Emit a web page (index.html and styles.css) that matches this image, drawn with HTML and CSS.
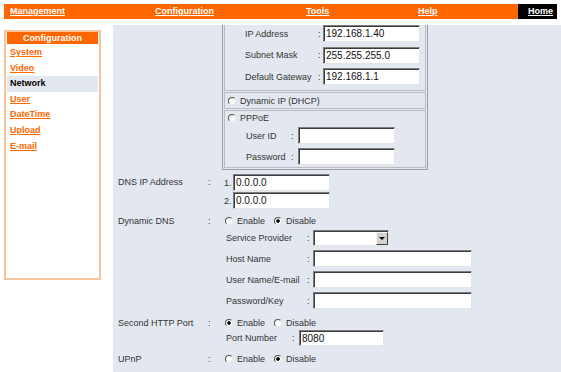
FILE: index.html
```html
<!DOCTYPE html>
<html>
<head>
<meta charset="utf-8">
<title>Network</title>
<link rel="stylesheet" href="styles.css">
</head>
<body>
<div class="topbar">
  <div class="tcell c1"><a href="#">Management</a></div>
  <div class="tcell c2"><a href="#">Configuration</a></div>
  <div class="tcell c3"><a href="#">Tools</a></div>
  <div class="tcell c4"><a href="#">Help</a></div>
  <div class="tcell c5"><a href="#">Home</a></div>
</div>
<div class="main">
  <div class="sidebar">
    <div class="side-head">Configuration</div>
    <div class="side-list">
      <a class="side-item" href="#">System</a>
      <a class="side-item" href="#">Video</a>
      <div class="side-item active">Network</div>
      <a class="side-item" href="#">User</a>
      <a class="side-item" href="#">DateTime</a>
      <a class="side-item" href="#">Upload</a>
      <a class="side-item" href="#">E-mail</a>
    </div>
  </div>
  <div class="content">
    <div class="frow">
      <div></div><div></div>
      <div class="box">
        <div class="sec sec-static">
          <div class="kv"><span>IP Address</span><span>:</span><input class="tb" type="text" value="192.168.1.40"></div>
          <div class="kv"><span>Subnet Mask</span><span>:</span><input class="tb" type="text" value="255.255.255.0"></div>
          <div class="kv"><span>Default Gateway</span><span>:</span><input class="tb" type="text" value="192.168.1.1"></div>
        </div>
        <div class="sec sec-dhcp">
          <label class="opt"><input class="rd" type="radio" name="ipmode"><span>Dynamic IP (DHCP)</span></label>
        </div>
        <div class="sec sec-pppoe">
          <label class="opt"><input class="rd" type="radio" name="ipmode"><span>PPPoE</span></label>
          <div class="kv kv-ppp"><span>User ID</span><span>:</span><input class="tb" type="text" value=""></div>
          <div class="kv kv-ppp"><span>Password</span><span>:</span><input class="tb" type="password" value=""></div>
        </div>
      </div>
    </div>

    <div class="frow r-dns">
      <div class="lab">DNS IP Address</div><div class="lab">:</div>
      <div class="dns">
        <div class="dnsline"><span class="num">1.</span><input class="tb" type="text" value="0.0.0.0"></div>
        <div class="dnsline"><span class="num">2.</span><input class="tb" type="text" value="0.0.0.0"></div>
      </div>
    </div>

    <div class="frow r-ddns">
      <div class="lab lab-r">Dynamic DNS</div><div class="lab lab-r">:</div>
      <div>
        <div class="radios">
          <label class="opt"><input class="rd" type="radio" name="ddns"><span>Enable</span></label>
          <label class="opt"><input class="rd" type="radio" name="ddns" checked><span>Disable</span></label>
        </div>
        <div class="sub sub-ddns">
          <span>Service Provider</span><span>:</span>
          <div class="select"><span class="sel-val"></span><span class="sel-btn"><span class="tri"></span></span></div>
          <span>Host Name</span><span>:</span><input class="tb wide" type="text" value="">
          <span>User Name/E-mail</span><span>:</span><input class="tb wide" type="text" value="">
          <span>Password/Key</span><span>:</span><input class="tb wide" type="password" value="">
        </div>
      </div>
    </div>

    <div class="frow r-http">
      <div class="lab lab-r">Second HTTP Port</div><div class="lab lab-r">:</div>
      <div>
        <div class="radios">
          <label class="opt"><input class="rd" type="radio" name="http2" checked><span>Enable</span></label>
          <label class="opt"><input class="rd" type="radio" name="http2"><span>Disable</span></label>
        </div>
        <div class="sub sub-port">
          <span>Port Number</span><span>:</span><input class="tb port" type="text" value="8080">
        </div>
      </div>
    </div>

    <div class="frow r-upnp">
      <div class="lab lab-r">UPnP</div><div class="lab lab-r">:</div>
      <div>
        <div class="radios">
          <label class="opt"><input class="rd" type="radio" name="upnp"><span>Enable</span></label>
          <label class="opt"><input class="rd" type="radio" name="upnp" checked><span>Disable</span></label>
        </div>
      </div>
    </div>
  </div>
</div>
</body>
</html>
```

FILE: styles.css
```css
html, body {
  margin: 0;
  padding: 0;
  background: #ffffff;
  height: 372px;
  overflow: hidden;
}
body {
  font-family: "Liberation Sans", Arial, sans-serif;
  font-size: 9px;
  color: #333333;
}

/* top navigation */
.topbar {
  display: flex;
  margin: 4px 4px 0 4px;
  width: 553px;
  height: 15px;
  line-height: 15px;
  background: #ff6600;
  font-weight: bold;
}
.tcell {
  padding-left: 6px;
  box-sizing: border-box;
}
.tcell a {
  color: #ffffff;
  text-decoration: underline;
}
.c1 { width: 145px; }
.c2 { width: 151px; }
.c3 { width: 112px; }
.c4 { width: 106px; }
.c5 {
  width: 39px;
  padding-left: 10px;
  background: #000000;
}

.main {
  display: flex;
  align-items: flex-start;
  margin-top: 6px;
}

/* sidebar */
.sidebar {
  margin: 5px 0 0 4px;
  width: 97px;
  height: 250px;
  box-sizing: border-box;
  border: 2px solid #f7c39c;
  padding: 0 1px;
  background: #ffffff;
  flex: none;
}
.side-head {
  height: 12px;
  line-height: 12px;
  background: #ff6600;
  color: #ffffff;
  font-weight: bold;
  text-align: center;
  margin-bottom: 1px;
}
.side-list {
  display: flex;
  flex-direction: column;
}
.side-item {
  height: 15.6px;
  line-height: 15.6px;
  padding-left: 3px;
  font-weight: bold;
  color: #ff6600;
  text-decoration: underline;
}
.side-item.active {
  color: #000000;
  text-decoration: none;
  background: #e3e8f0;
}

/* content */
.content {
  flex: 1;
  margin-left: 12px;
  padding-left: 5px;
  height: 347px;
  background: #e3e8f0;
}
.frow {
  display: grid;
  grid-template-columns: 90px 14px auto;
  align-items: start;
}
.lab {
  height: 17px;
  line-height: 16px;
}
.lab-r {
  height: 14px;
  line-height: 14px;
}

/* IP settings box */
.box {
  width: 206px;
  box-sizing: border-box;
  border: 1px solid #9a9da0;
  border-top: none;
  padding: 0 1px 1px 1px;
}
.sec {
  border: 1px solid #b9bdc2;
}
.sec + .sec {
  margin-top: 1px;
}
.sec-static {
  border-top: none;
  padding: 0 0 5px 20px;
  display: flex;
  flex-direction: column;
  gap: 4.5px;
}
.kv {
  display: grid;
  grid-template-columns: 73px 5px 97px;
  align-items: center;
  height: 17px;
}
.sec-dhcp {
  height: 15px;
  padding-left: 3px;
  display: flex;
  align-items: center;
}
.sec-pppoe {
  padding: 0 0 2px 3px;
}
.sec-pppoe .opt {
  height: 14px;
}
.kv-ppp {
  grid-template-columns: 45px 7px 97px;
  margin-left: 18px;
  margin-top: 2px;
}
.kv-ppp + .kv-ppp {
  margin-top: 4px;
}

/* text boxes */
.tb {
  box-sizing: border-box;
  width: 97px;
  height: 17px;
  margin: 0;
  padding: 0 0 0 2px;
  font-family: "Liberation Sans", Arial, sans-serif;
  font-size: 10px;
  color: #111111;
  background: #ffffff;
  border: 1px solid;
  border-color: #7c7c7c #e4e4e4 #e4e4e4 #7c7c7c;
  box-shadow: inset 1px 1px 0 #3c3c3c;
  outline: none;
}
.tb.wide { width: 159px; }
.tb.port { width: 85px; height: 16px; }

/* radios */
.opt {
  display: flex;
  align-items: center;
}
.rd {
  appearance: none;
  -webkit-appearance: none;
  width: 8px;
  height: 8px;
  margin: 0 4px 0 0;
  box-sizing: border-box;
  border-radius: 50%;
  border: 1px solid;
  border-color: #555555 #e8e8e8 #e8e8e8 #555555;
  background: #ffffff;
  flex: none;
}
.rd:checked {
  background: radial-gradient(circle, #000000 0, #000000 1.4px, #ffffff 2.2px);
}
.radios {
  display: flex;
  align-items: center;
  height: 14px;
  padding-left: 3px;
}
.radios .opt {
  margin-right: 9px;
}

/* DNS */
.r-dns {
  margin-top: 4px;
}
.dnsline {
  display: flex;
  align-items: center;
  height: 17px;
  padding-left: 2px;
}
.dnsline + .dnsline {
  margin-top: 1px;
}
.num {
  width: 9px;
}

/* Dynamic DNS */
.r-ddns {
  margin-top: 5px;
}
.sub {
  display: grid;
  align-items: center;
  padding-left: 4px;
  margin-top: 1px;
  row-gap: 4px;
}
.sub-ddns {
  grid-template-columns: 81px 6px auto;
  grid-auto-rows: 17px;
}
.sub-port {
  grid-template-columns: 66px 7px auto;
  grid-auto-rows: 16px;
  margin-top: 0;
}
.select {
  display: flex;
  width: 76px;
  height: 16px;
  box-sizing: border-box;
  background: #ffffff;
  border: 1px solid;
  border-color: #7c7c7c #e4e4e4 #e4e4e4 #7c7c7c;
  box-shadow: inset 1px 1px 0 #3c3c3c;
}
.sel-val {
  flex: 1;
}
.sel-btn {
  width: 12px;
  margin: 1px 0 0 0;
  box-sizing: border-box;
  background: #d6d3ce;
  border: 1px solid;
  border-color: #f4f4f4 #404040 #404040 #f4f4f4;
  display: flex;
  align-items: center;
  justify-content: center;
}
.tri {
  width: 0;
  height: 0;
  border-left: 3px solid transparent;
  border-right: 3px solid transparent;
  border-top: 3px solid #000000;
}

.r-http {
  margin-top: 7px;
}
.r-upnp {
  margin-top: 6px;
}
```
